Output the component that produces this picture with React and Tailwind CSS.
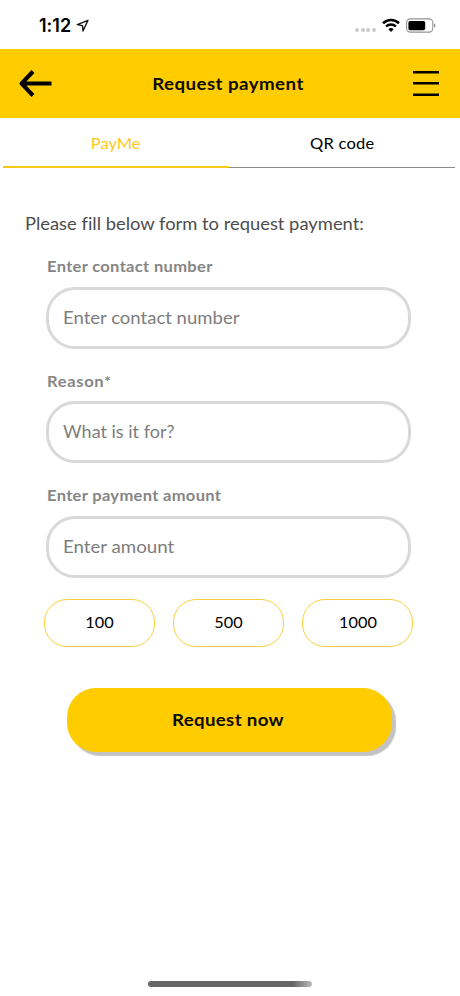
const fields = [
  { label: "Enter contact number", hint: "Enter contact number", labelFit: "tracking-[0.3px]", hintFit: "scale-x-[1.09]" },
  { label: "Reason*", hint: "What is it for?", labelFit: "tracking-[0.6px]", hintFit: "scale-x-[1.06]" },
  { label: "Enter payment amount", hint: "Enter amount", labelFit: "tracking-[0.3px]", hintFit: "scale-x-[1.1]" },
];

function StatusBar() {
  return (
    <div className="flex h-[49px] items-start justify-between pl-[39px] pr-[24px]">
      <div className="flex items-center pt-[14px]">
        <span className="font-[Inter] text-[18px] font-semibold leading-[24px] text-black">1:12</span>
        <svg className="ml-[5px]" width="14" height="14" viewBox="0 0 14 14" fill="none" stroke="#111" strokeWidth="1.4" strokeLinejoin="round">
          <path d="M12 1.3 1.3 5.6l5.2 1 .5 5.4z" />
        </svg>
      </div>
      <div className="flex items-center pt-[17px]">
        <div className="mt-[9px] flex gap-[1.7px]">
          {[0, 1, 2, 3].map((i) => (
            <span key={i} className="size-[4px] rounded-full bg-[#cbcbcb]" />
          ))}
        </div>
        <svg className="ml-[6px]" width="18" height="16" viewBox="0 0 18 16" fill="none" stroke="#000">
          <path d="M1 6.3a11.5 11.5 0 0 1 16 0" strokeWidth="2.6" />
          <path d="M4 9.5a7.2 7.2 0 0 1 10 0" strokeWidth="2.4" />
          <path d="M9 15 6.4 12.2a3.8 3.8 0 0 1 5.2 0z" fill="#000" stroke="none" />
        </svg>
        <svg className="ml-[6px]" width="30" height="15" viewBox="0 0 30 15">
          <rect x=".6" y=".9" width="26.2" height="13.2" rx="3.8" fill="none" stroke="#929292" strokeWidth="1.1" />
          <rect x="2.4" y="2.9" width="16.8" height="9.4" rx="1.8" fill="#000" />
          <path d="M28 5.2v4.6q1.4-.7 1.4-2.3T28 5.2z" fill="#8c8c8c" />
        </svg>
      </div>
    </div>
  );
}

export default function App() {
  return (
    <div className="flex h-[996px] w-[460px] flex-col overflow-hidden bg-white font-[Lato,sans-serif] [font-variant-ligatures:none]">
      <StatusBar />
      <header className="grid h-[69px] grid-cols-[80px_1fr_80px] items-center bg-[#ffcc00] pl-[19px] pr-[21px]">
        <svg width="33" height="28" viewBox="0 0 33 28" fill="none" stroke="#000" strokeWidth="4">
          <path d="M32.5 13.5H4M14 1.5 2.6 13.5 14 25.5" strokeLinejoin="round" />
        </svg>
        <h1 className="-ml-px mr-px scale-x-[1.1] whitespace-nowrap text-center text-[17px] font-bold leading-6 tracking-[0.4px] text-[#0d0a00]">Request payment</h1>
        <svg className="ml-auto" width="26" height="28" viewBox="0 0 26 28" stroke="#000" strokeWidth="2.4">
          <path d="M0 2.3h26M0 13.3h26M0 24.7h26" />
        </svg>
      </header>
      <nav className="flex h-[50px] pl-[3px] pr-[5px] text-[15px] leading-[50px]">
        <div className="w-[226px] border-b-2 border-[#f5cb18] text-center text-[#f7cb1d]">
          <span className="inline-block scale-x-[1.1]">PayMe</span>
        </div>
        <div className="grow border-b border-[#8b8b8b] text-center text-black">
          <span className="inline-block scale-x-[1.1] tracking-[0.2px]">QR code</span>
        </div>
      </nav>
      <main className="flex flex-col">
        <p className="ml-[25px] mt-[44px] origin-left scale-x-[1.08] self-start whitespace-nowrap text-[17px] leading-6 text-[#4d4d4d]">Please fill below form to request payment:</p>
        <form className="ml-[46px] mt-[18px] flex w-[364.5px] flex-col">
          {fields.map((f) => (
            <label key={f.label} className="mb-[14.5px] flex h-[100px] flex-col">
              <span className={`ml-px origin-left scale-x-[1.1] self-start whitespace-nowrap text-[15px] font-bold leading-6 text-[#858585] ${f.labelFit}`}>{f.label}</span>
              <span className="mt-[8.5px] flex h-[62px] items-center rounded-[29px] border-3 border-[#d9d9d9] pl-[14px] text-[17px] text-[#7d7d7d]">
                <span className={`origin-left ${f.hintFit}`}>{f.hint}</span>
              </span>
            </label>
          ))}
        </form>
        <div className="ml-[44px] mt-[1.5px] flex gap-[18px]">
          {["100", "500", "1000"].map((n) => (
            <button key={n} type="button" className="h-[48px] w-[111px] rounded-[23px] border border-[#f9d03c] text-[15.5px] text-black">
              <span className="inline-block scale-x-[1.05]">{n}</span>
            </button>
          ))}
        </div>
        <button type="button" className="ml-[67px] mt-[41px] h-[64px] w-[325px] rounded-[29px] bg-[#ffcc00] pr-[3px] text-[17px] font-bold tracking-[0.3px] text-[#0d0a00] shadow-[4px_4px_1px_#c3c3c3]">
          <span className="inline-block scale-x-[1.1]">Request now</span>
        </button>
      </main>
      <div className="mb-[9px] ml-[148px] mt-auto h-[6px] w-[164px] rounded-full bg-linear-to-r from-[#666] from-88% to-[#bbb]" />
    </div>
  );
}
